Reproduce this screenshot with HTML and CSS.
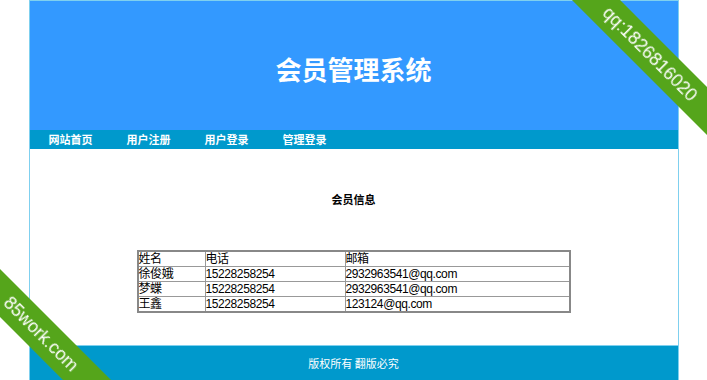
FILE: index.html
```html
<!DOCTYPE html>
<html lang="zh-CN">

<head>
    <meta charset="UTF-8">
    <meta name="viewport" content="width=device-width, initial-scale=1.0">
    <title>会员管理系统</title>
    <link rel="stylesheet" href="styles.css">
</head>

<body>
    <div class="wrap">
        <div class="header">
            <h1>会员管理系统</h1>
        </div>
        <div class="nav">
            <a href="#">网站首页</a>
            <a href="#">用户注册</a>
            <a href="#">用户登录</a>
            <a href="#">管理登录</a>
        </div>
        <div class="main">
            <h3>会员信息</h3>
            <table class="list">
                <tr>
                    <td class="c1">姓名</td>
                    <td class="c2">电话</td>
                    <td class="c3">邮箱</td>
                </tr>
                <tr>
                    <td>徐俊娥</td>
                    <td>15228258254</td>
                    <td>2932963541@qq.com</td>
                </tr>
                <tr>
                    <td>梦蝶</td>
                    <td>15228258254</td>
                    <td>2932963541@qq.com</td>
                </tr>
                <tr>
                    <td>王鑫</td>
                    <td>15228258254</td>
                    <td>123124@qq.com</td>
                </tr>
            </table>
        </div>
        <div class="footer">版权所有 翻版必究</div>
    </div>

    <div class="ribbon ribbon-qq"><span>qq:1826816020</span></div>
    <div class="ribbon ribbon-site"><span>85work.com</span></div>
</body>

</html>
```

FILE: styles.css
```css
html,
body {
    margin: 0;
    padding: 0;
    overflow: hidden;
}

body {
    font-family: "Noto Sans CJK SC", sans-serif;
    font-size: 11px;
    color: #000;
    background-color: #fff;
}

.wrap {
    width: 648px;
    margin: 0 auto;
    border: 1px solid #7fd0ef;
    border-bottom: none;
}

.header {
    height: 129px;
    background-color: #3399ff;
    display: flex;
    align-items: center;
    justify-content: center;
}

.header h1 {
    margin: 0;
    color: #fff;
    font-size: 26px;
    font-weight: bold;
    line-height: 1;
    padding-top: 6px;
}

.nav {
    height: 19px;
    background-color: #0099cc;
    display: flex;
    gap: 34px;
    padding-left: 19px;
}

.nav a {
    color: #fff;
    font-weight: bold;
    font-size: 11px;
    line-height: 19px;
    text-decoration: none;
}

.main {
    height: 196px;
    padding-top: 40px;
    box-sizing: border-box;
}

.main h3 {
    margin: 0 0 41px;
    font-size: 11px;
    line-height: 20px;
    text-align: center;
}

.list {
    width: 434px;
    margin: 0 0 0 107px;
    border-collapse: collapse;
    border: 2px solid #888;
    font-family: "Liberation Sans", "Noto Sans CJK SC", sans-serif;
    font-size: 12px;
    letter-spacing: -0.4px;
}

.list td {
    border: 1px solid #999;
    padding: 0;
    line-height: 14px;
    height: 14px;
}

.list .c1 {
    width: 66px;
}

.list .c2 {
    width: 139px;
}

.footer {
    height: 34px;
    background-color: #0099cc;
    border-top: 1px solid #7fd0ef;
    color: #fff;
    text-align: center;
    line-height: 34px;
    font-size: 11px;
}

/* 水印角标 */
.ribbon {
    position: fixed;
    width: 220px;
    height: 34px;
    background-color: #55a51b;
    color: #fff;
    font-family: "Liberation Sans", sans-serif;
    font-size: 18px;
    display: flex;
    align-items: center;
    justify-content: center;
    transform: rotate(45deg);
}

.ribbon span {
    line-height: 16px;
}

.ribbon-qq {
    left: 540px;
    top: 37px;
}

.ribbon-site {
    left: -69px;
    top: 317px;
}
```
